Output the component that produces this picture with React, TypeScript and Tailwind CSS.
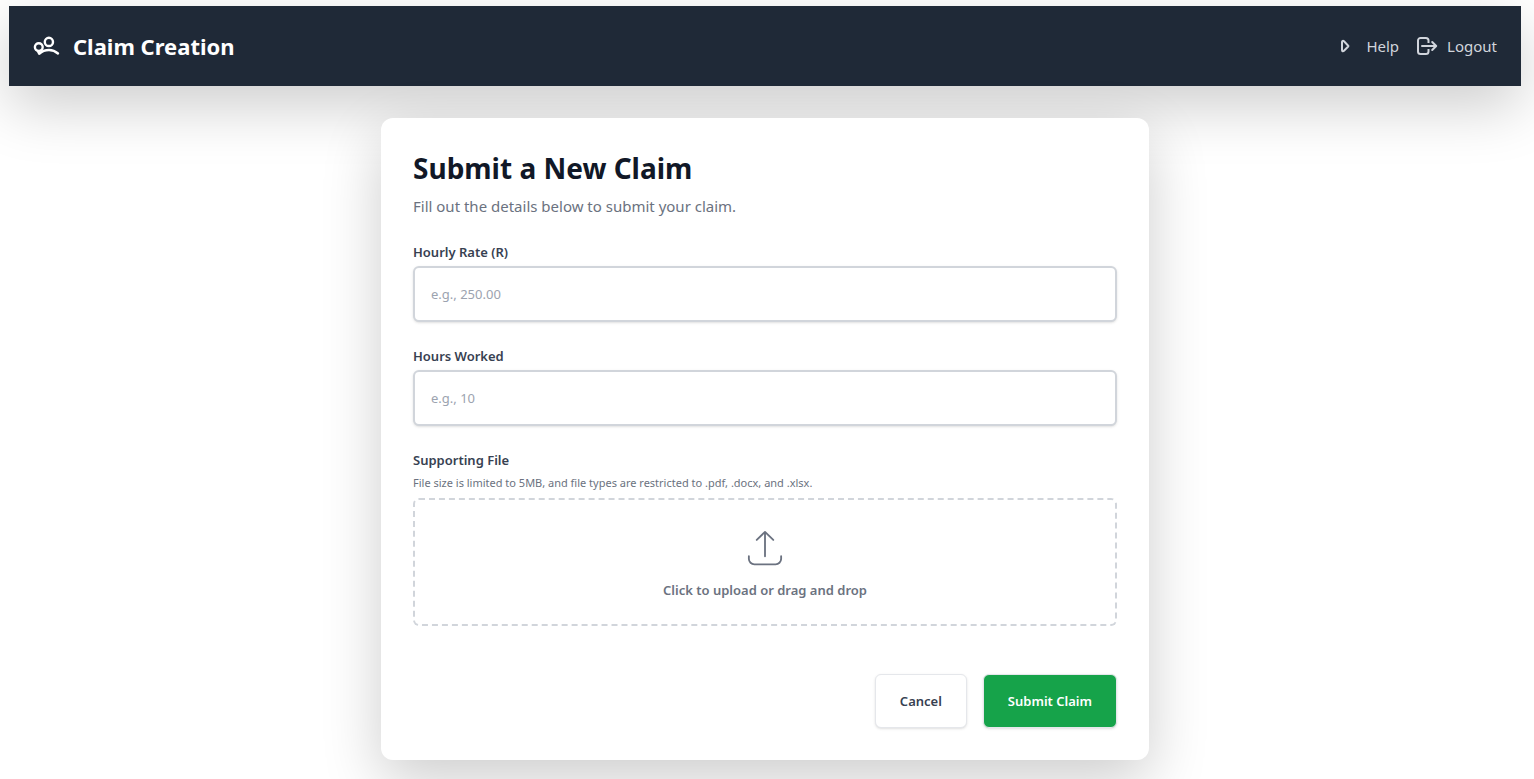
import type { ReactNode } from "react";

function TeamIcon() {
  return (
    <svg viewBox="0 0 32 32" className="size-8" fill="none" stroke="currentColor" strokeWidth="2.400" strokeLinecap="round" strokeLinejoin="round" aria-hidden="true">
      <circle cx="15.900" cy="11.900" r="4.100" />
      <circle cx="5.800" cy="17.100" r="3.900" />
      <path d="M4.800 21 6.200 23.800C9 21.200 12.500 20 16 20c3.500 0 6.400 1.200 9 3.500" />
    </svg>
  );
}

function PlayIcon() {
  return (
    <svg viewBox="0 0 24 24" className="size-6" fill="none" stroke="currentColor" strokeWidth="2" strokeLinejoin="round" aria-hidden="true">
      <path d="M8 8.100c0-1.400 1.100-1.700 2-.8l4.200 4.400c.3.300.3.500 0 .8L10 16.800c-.9.900-2 .6-2-.8z" />
    </svg>
  );
}

function LogoutIcon() {
  return (
    <svg viewBox="0 0 24 24" className="size-6" fill="none" stroke="currentColor" strokeWidth="2" strokeLinecap="round" strokeLinejoin="round" aria-hidden="true">
      <path strokeLinecap="butt" d="M13.500 9V6.500A2.600 2.600 0 0 0 10.900 3.900H5.600A2.600 2.600 0 0 0 3 6.500v11a2.600 2.600 0 0 0 2.600 2.600h5.300a2.600 2.600 0 0 0 2.600-2.600V15" />
      <path d="M7 12h14M17.200 8l4 4-4 4" />
    </svg>
  );
}

function UploadIcon() {
  return (
    <svg viewBox="0 0 24 24" className="size-11" fill="none" stroke="currentColor" strokeWidth="1" strokeLinecap="round" strokeLinejoin="round" aria-hidden="true">
      <path d="M3.200 16.500v1.500A3 3 0 0 0 6.200 20.900h11.600A3 3 0 0 0 20.800 18V16.500M7.500 7.600 12 3.200l4.500 4.400M12 3.200v13.300" />
    </svg>
  );
}

function NavLink({ icon, children }: { icon: ReactNode; children: ReactNode }) {
  return (
    <a href="#" className="flex items-center gap-2 text-[15px] leading-6 text-gray-300 hover:text-white">
      {icon}
      <span>{children}</span>
    </a>
  );
}

function Field({ id, label, placeholder }: { id: string; label: string; placeholder: string }) {
  return (
    <div>
      <label htmlFor={id} className="block text-[13px] leading-5 font-semibold text-[#374151]">
        {label}
      </label>
      <input
        id={id}
        type="text"
        inputMode="decimal"
        placeholder={placeholder}
        className="mt-1 block h-14 w-full rounded-md border-2 border-[#d1d5db] bg-white px-4 text-[13px] text-[#111827] shadow-sm placeholder:text-[#9ca3af]"
      />
    </div>
  );
}

export default function App() {
  return (
    <div className="min-h-screen overflow-hidden bg-white pt-1.5 pr-[13px] pb-4 pl-[9px] font-['Noto_Sans','Open_Sans',sans-serif]">
      <header className="flex h-20 items-center justify-between bg-[#1f2937] px-6 shadow-[0_20px_60px_rgba(0,0,0,0.2)]">
        <div className="flex items-center gap-2 text-white">
          <TeamIcon />
          <h1 className="text-[22px] leading-8 font-bold">Claim Creation</h1>
        </div>
        <nav className="flex items-center gap-4">
          <NavLink icon={<PlayIcon />}>Help</NavLink>
          <NavLink icon={<LogoutIcon />}>Logout</NavLink>
        </nav>
      </header>

      <main className="relative mx-auto mt-8 max-w-3xl rounded-xl bg-white p-8 shadow-[0_20px_60px_rgba(0,0,0,0.2)]">
        <h2 className="text-[28px] leading-9 font-bold text-[#111827]">Submit a New Claim</h2>
        <p className="mt-2 text-[15px] leading-6 text-[#6b7280]">Fill out the details below to submit your claim.</p>

        <form className="mt-6 flex flex-col gap-6">
          <Field id="hourly-rate" label="Hourly Rate (R)" placeholder="e.g., 250.00" />
          <Field id="hours-worked" label="Hours Worked" placeholder="e.g., 10" />

          <div>
            <label htmlFor="supporting-file" className="block text-[13px] leading-5 font-semibold text-[#374151]">
              Supporting File
            </label>
            <p id="file-hint" className="mt-1 text-[11px] leading-[18px] text-[#6b7280]">
              File size is limited to 5MB, and file types are restricted to .pdf, .docx, and .xlsx.
            </p>
            <label
              htmlFor="supporting-file"
              className="mt-1.5 flex h-32 cursor-pointer flex-col items-center justify-center gap-2.5 rounded-md border-2 border-dashed border-[#d1d5db] pt-0.5 text-[#6b7280]"
            >
              <UploadIcon />
              <span className="text-[13px] leading-5 font-semibold">Click to upload or drag and drop</span>
              <input id="supporting-file" type="file" accept=".pdf,.docx,.xlsx" aria-describedby="file-hint" className="sr-only" />
            </label>
          </div>

          <div className="mt-6 flex justify-end gap-4">
            <button type="button" className="rounded-md border border-[#e5e7eb] bg-white px-6 py-4 text-[13px] leading-5 font-semibold text-[#374151] shadow-sm">
              Cancel
            </button>
            <button type="submit" className="rounded-md border border-[#e5e7eb] bg-[#16a34a] px-6 py-4 text-[13px] leading-5 font-semibold text-white shadow-sm">
              Submit Claim
            </button>
          </div>
        </form>
      </main>
    </div>
  );
}
